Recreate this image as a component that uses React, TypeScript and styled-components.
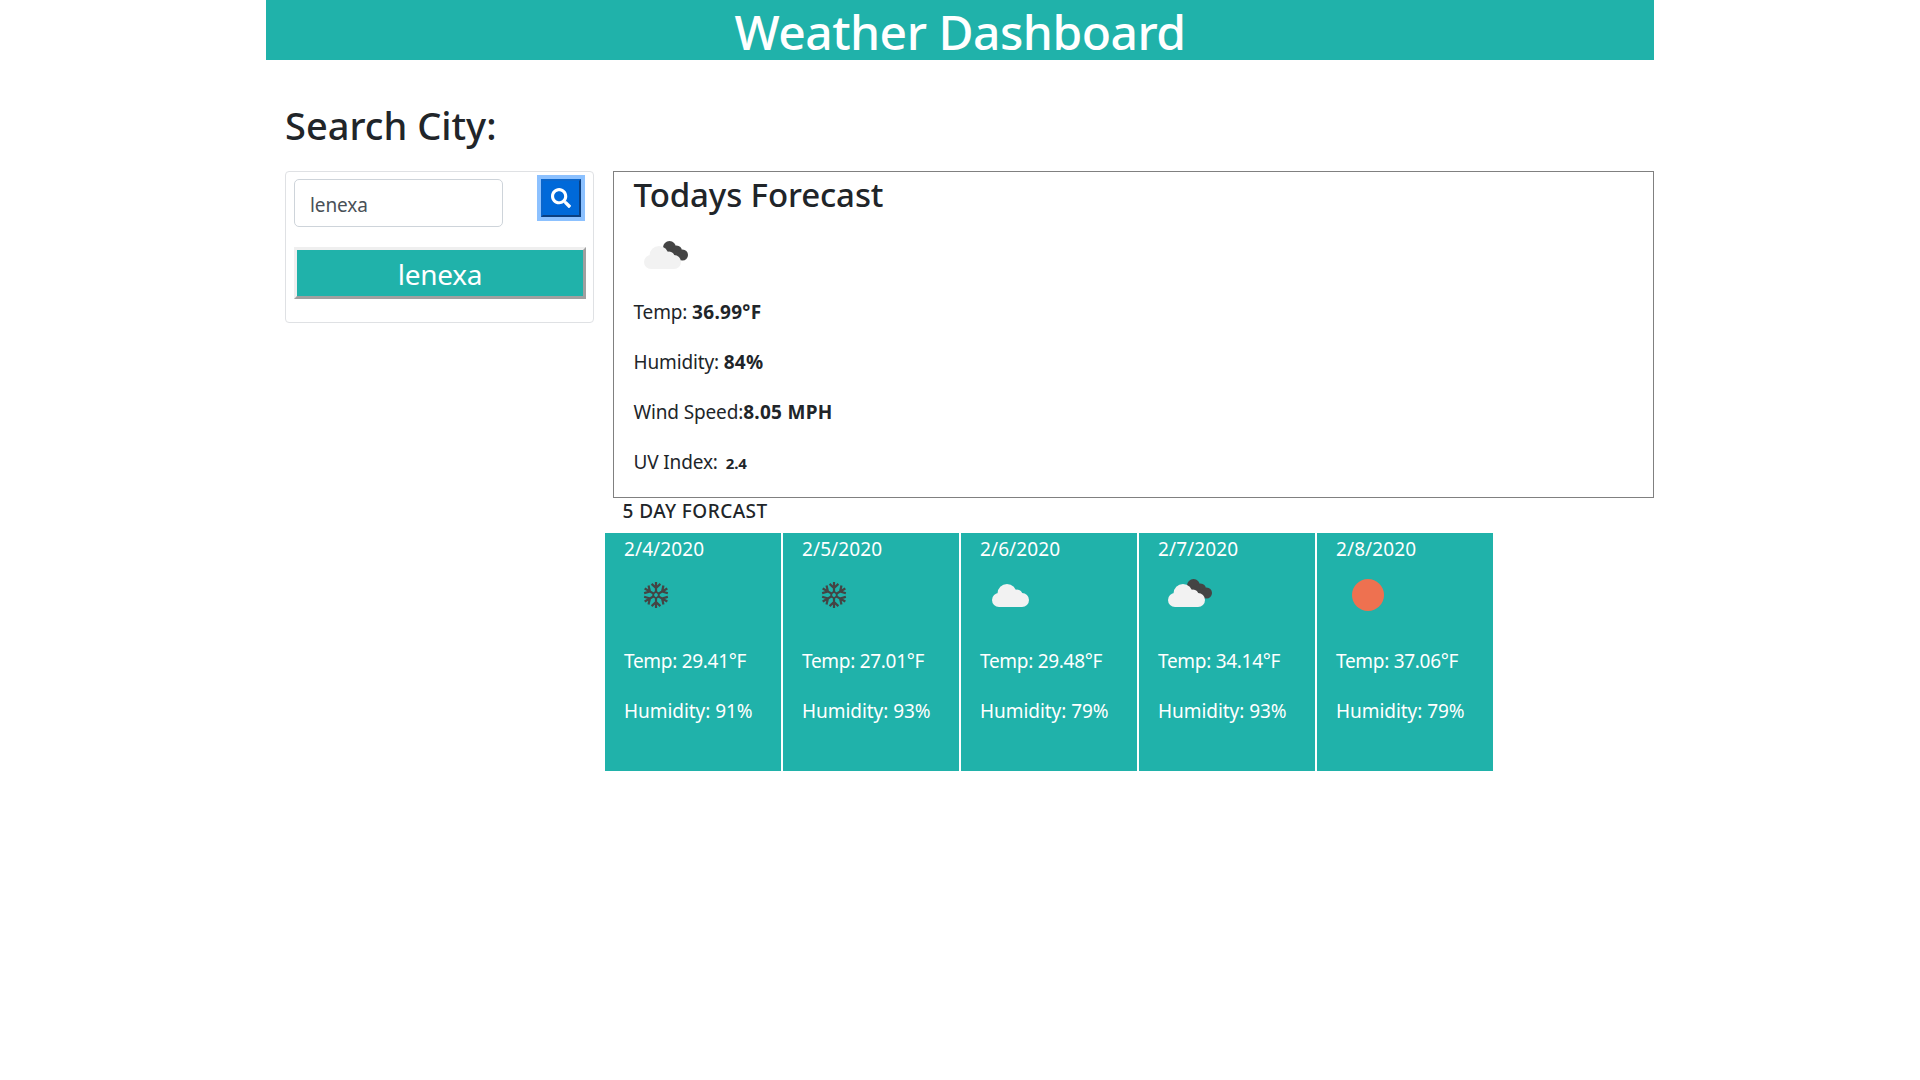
import React from "react";
import styled, { createGlobalStyle } from "styled-components";
import { FaSearch } from "react-icons/fa";

const Global = createGlobalStyle`
  html, body { margin: 0; padding: 0; background: #fff; }
  body { font-family: "Noto Sans", "Open Sans", sans-serif; color: #212529; }
  * { box-sizing: border-box; }
`;

const Page = styled.div`
  width: 1388px;
  margin: 0 auto;
  min-height: 1080px;
`;
const Header = styled.header`
  height: 60px;
  background: #20b2aa;
  color: #fff;
  text-align: center;
  font-size: 48px;
  font-weight: 500;
  line-height: 63px;
  letter-spacing: -0.5px;
`;
const SearchTitle = styled.h2`
  margin: 0;
  padding: 40px 0 0 19px;
  height: 111px;
  font-size: 38px;
  font-weight: 500;
  line-height: 50px;
  letter-spacing: 0;
`;
const Row = styled.div`
  display: flex;
  align-items: flex-start;
  padding-left: 19px;
  gap: 19px;
`;
const SearchCard = styled.div`
  width: 309px;
  height: 152px;
  border: 1px solid #dfe1e4;
  border-radius: 4px;
  padding: 7px 8px;
  display: flex;
  flex-direction: column;
  gap: 20px;
`;
const SearchRow = styled.div`
  display: flex;
  justify-content: space-between;
  align-items: flex-start;
  padding-right: 4px;
`;
const Input = styled.input`
  width: 209px;
  height: 48px;
  border: 1px solid #ced4da;
  border-radius: 5px;
  padding: 3px 15px 0;
  font: 400 19px "Noto Sans", sans-serif;
  letter-spacing: -0.1px;
  color: #495057;
  outline: none;
`;
const IconButton = styled.button`
  width: 40px;
  height: 38px;
  background: #0069d9;
  border: 2px solid;
  border-color: #0a66cc #0b3f80 #0b3f80 #0a66cc;
  box-shadow: 0 0 0 4px #8cc1ff;
  color: #fff;
  padding: 0;
  display: flex;
  align-items: center;
  justify-content: center;
  font-size: 20px;
`;
const CityButton = styled.button`
  width: 292px;
  height: 52px;
  background: #20b2aa;
  color: #fff;
  border: 3px solid;
  border-color: #efefef #a0a0a0 #a0a0a0 #efefef;
  font: 400 28px "Noto Sans", sans-serif;
  letter-spacing: -0.3px;
  padding: 1px 0 0;
`;
const TodayBox = styled.section`
  width: 1041px;
  height: 327px;
  border: 1.5px solid #808080;
  padding: 0 19.5px;
`;
const TodayTitle = styled.h3`
  margin: 0;
  font-size: 33px;
  font-weight: 500;
  line-height: 46px;
  letter-spacing: -0.1px;
`;
const TodayIcon = styled.div`
  height: 69px;
  padding: 22px 0 0 8px;
`;
const Stat = styled.p`
  margin: 0;
  font-size: 19px;
  line-height: 50px;
  letter-spacing: -0.15px;
  b { font-weight: 700; letter-spacing: 0.3px; }
`;
const Uv = styled.span`
  font-size: 15px;
  font-weight: 700;
  margin-left: 8px;
`;
const ForecastTitle = styled.div`
  margin-left: 356.5px;
  height: 35px;
  font-size: 19px;
  font-weight: 500;
  line-height: 26px;
  letter-spacing: 0.45px;
`;
const Cards = styled.div`
  display: flex;
  gap: 2px;
  margin-left: 339px;
`;
const Card = styled.article`
  width: 176px;
  height: 238px;
  background: #20b2aa;
  color: #fff;
  padding: 3px 19px 0;
`;
const CardDate = styled.div`
  font-size: 19px;
  line-height: 27px;
  letter-spacing: 0.1px;
`;
const CardIcon = styled.div<{ $x: number }>`
  height: 73px;
  padding: 0 0 10px ${(p) => p.$x}px;
  display: flex;
  align-items: center;
`;
const CardStat = styled.div<{ $spacing: number }>`
  font-size: 19px;
  line-height: 50px;
  letter-spacing: ${(p) => p.$spacing}px;
`;

function Cloud({ dark }: { dark?: boolean }) {
  return (
    <svg width="46" height="33" viewBox="0 0 46 33" aria-hidden="true">
      {dark && (
        <g fill="#444">
          <circle cx="27.5" cy="7.5" r="6.5" />
          <circle cx="34.5" cy="11" r="5.5" />
          <circle cx="40.5" cy="15" r="5.5" />
          <path d="M24 8 L41 13 L38 21 L24 16 Z" />
        </g>
      )}
      <g fill="#f2f2f2">
        <circle cx="9" cy="22" r="7" />
        <circle cx="17" cy="15.5" r="9.5" />
        <circle cx="27" cy="17" r="5.5" />
        <circle cx="32" cy="22" r="7" />
        <rect x="9" y="15" width="23" height="14" />
      </g>
    </svg>
  );
}

function Sun() {
  return (
    <svg width="34" height="34" viewBox="0 0 34 34" aria-hidden="true">
      <circle cx="17" cy="17" r="16" fill="#ee7150" />
    </svg>
  );
}

function Snow() {
  return (
    <svg width="28" height="28" viewBox="-14 -14 28 28" aria-hidden="true">
      <g stroke="#444" strokeWidth="2.2" fill="none" strokeLinecap="square">
        {[0, 60, 120, 180, 240, 300].map((a) => (
          <path key={a} transform={`rotate(${a})`} d="M0 -3.2 L0 -12 M-3.6 -10.4 L0 -7 L3.6 -10.4" />
        ))}
        <circle r="2.8" strokeWidth="1.8" />
      </g>
    </svg>
  );
}

const forecast = [
  { date: "2/4/2020", temp: "29.41", hum: "91", x: 18, icon: <Snow /> },
  { date: "2/5/2020", temp: "27.01", hum: "93", x: 18, icon: <Snow /> },
  { date: "2/6/2020", temp: "29.48", hum: "79", x: 10, icon: <Cloud /> },
  { date: "2/7/2020", temp: "34.14", hum: "93", x: 8, icon: <Cloud dark /> },
  { date: "2/8/2020", temp: "37.06", hum: "79", x: 14.5, icon: <Sun /> },
];

export default function App() {
  return (
    <Page>
      <Global />
      <Header>Weather Dashboard</Header>
      <SearchTitle>Search City:</SearchTitle>
      <Row>
        <SearchCard>
          <SearchRow>
            <Input defaultValue="lenexa" />
            <IconButton aria-label="Search"><FaSearch /></IconButton>
          </SearchRow>
          <CityButton>lenexa</CityButton>
        </SearchCard>
        <TodayBox>
          <TodayTitle>Todays Forecast</TodayTitle>
          <TodayIcon><Cloud dark /></TodayIcon>
          <Stat>Temp: <b>36.99°F</b></Stat>
          <Stat>Humidity: <b>84%</b></Stat>
          <Stat>Wind Speed:<b>8.05 MPH</b></Stat>
          <Stat>UV Index:<Uv>2.4</Uv></Stat>
        </TodayBox>
      </Row>
      <ForecastTitle>5 DAY FORCAST</ForecastTitle>
      <Cards>
        {forecast.map((d) => (
          <Card key={d.date}>
            <CardDate>{d.date}</CardDate>
            <CardIcon $x={d.x}>{d.icon}</CardIcon>
            <CardStat $spacing={-0.3}>Temp: {d.temp}°F</CardStat>
            <CardStat $spacing={-0.05}>Humidity: {d.hum}%</CardStat>
          </Card>
        ))}
      </Cards>
    </Page>
  );
}
